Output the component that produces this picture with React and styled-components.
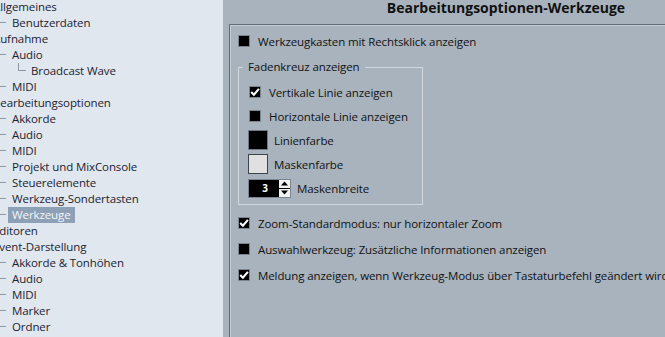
import React from "react";
import styled, { createGlobalStyle } from "styled-components";

const Global = createGlobalStyle`
  html, body { margin: 0; padding: 0; overflow: hidden; }
  body { font-family: "Open Sans", "Noto Sans", sans-serif; font-size: 11.5px; letter-spacing: -0.1px; }
`;

const Window = styled.div`
  display: flex;
  width: 665px;
  height: 337px;
  overflow: hidden;
  background: #a8b3be;
`;

const Sidebar = styled.div`
  flex: none;
  width: 223px;
  height: 100%;
  overflow: hidden;
  background: #e1e7ef;
`;

const Tree = styled.div`
  margin: -1px 0 0 -7px;
  display: flex;
  flex-direction: column;
`;

const Row = styled.div`
  display: flex;
  align-items: center;
  height: 16px;
  white-space: nowrap;
  color: #1b2331;
`;

const Indent = styled.span`
  flex: none;
  width: ${(p) => p.$w}px;
`;

const Branch = styled.span`
  flex: none;
  align-self: flex-start;
  width: ${(p) => p.$w}px;
  height: 8px;
  box-sizing: border-box;
  border-bottom: 1px solid #8e98a3;
  border-left: ${(p) => (p.$elbow ? "1px solid #8e98a3" : "none")};
  margin-right: ${(p) => p.$gap}px;
`;

const Label = styled.span`
  line-height: 16px;
  padding: 0 4px;
  margin-left: -4px;
  background: ${(p) => (p.$selected ? "#8da0b6" : "transparent")};
  color: ${(p) => (p.$selected ? "#f4f7fb" : "inherit")};
`;

const Main = styled.div`
  flex: none;
  width: 554px;
  padding-left: 6px;
  display: flex;
  flex-direction: column;
`;

const Header = styled.div`
  height: 24px;
  text-align: center;
  font-weight: 700;
  font-size: 14px;
  letter-spacing: 0;
  line-height: 16px;
  color: #111;
  white-space: nowrap;
`;

const Frame = styled.div`
  flex: 1;
  border-top: 1px solid #636d78;
  border-left: 1px solid #636d78;
  box-shadow: inset 1px 1px 0 #c3cbd3;
  padding: 3px 0 0 8px;
  display: flex;
  flex-direction: column;
  align-items: flex-start;
  color: #121212;
`;

const OptRow = styled.div`
  display: flex;
  align-items: center;
  height: ${(p) => p.$h || 26}px;
  gap: ${(p) => p.$gap || 8}px;
  white-space: nowrap;
`;

const Box = styled.span`
  flex: none;
  width: 12px;
  height: 12px;
  box-sizing: border-box;
  background: #000;
  border: 1px solid #7b8691;
  display: flex;
  align-items: center;
  justify-content: center;
`;

const Group = styled.fieldset`
  margin: 5px 0;
  width: 185px;
  box-sizing: border-box;
  border: 1px solid #d2d8de;
  padding: 5px 0 4px 10px;
  min-width: 0;
`;

const Legend = styled.legend`
  margin-left: -6px;
  padding: 0 5px;
  line-height: 16px;
  color: #121212;
`;

const Swatch = styled.span`
  flex: none;
  width: 20px;
  height: 20px;
  box-sizing: border-box;
  margin-left: -1px;
  background: ${(p) => p.$color};
  border: 1px solid ${(p) => p.$border};
`;

const Spin = styled.span`
  flex: none;
  display: flex;
  width: 43px;
  height: 19px;
  margin-left: -1px;
  box-sizing: border-box;
  border: 1px solid #7b8691;
  background: #000;
`;

const SpinField = styled.span`
  flex: 1;
  color: #fff;
  font-size: 10px;
  font-weight: 700;
  display: flex;
  align-items: center;
  justify-content: center;
  padding-left: 2px;
`;

const SpinButtons = styled.span`
  flex: none;
  width: 11px;
  display: flex;
  flex-direction: column;
  gap: 1px;
`;

const SpinBtn = styled.span`
  flex: 1;
  background: #f2f2f2;
  display: flex;
  align-items: center;
  justify-content: center;
`;

const Check = () => (
  <svg width="10" height="10" viewBox="0 0 10 10">
    <path d="M1.2 5 L3.9 7.8 L8.9 1.9" fill="none" stroke="#fff" strokeWidth="2.1" />
  </svg>
);

const CheckBox = ({ checked }) => <Box>{checked && <Check />}</Box>;

const tree = [
  ["Allgemeines", 0],
  ["Benutzerdaten", 1],
  ["Aufnahme", 0],
  ["Audio", 1],
  ["Broadcast Wave", 2],
  ["MIDI", 1],
  ["Bearbeitungsoptionen", 0],
  ["Akkorde", 1],
  ["Audio", 1],
  ["MIDI", 1],
  ["Projekt und MixConsole", 1],
  ["Steuerelemente", 1],
  ["Werkzeug-Sondertasten", 1],
  ["Werkzeuge", 1, true],
  ["Editoren", 0],
  ["Event-Darstellung", 0],
  ["Akkorde & Tonhöhen", 1],
  ["Audio", 1],
  ["MIDI", 1],
  ["Marker", 1],
  ["Ordner", 1],
];

const TreeRow = ({ text, level, selected }) => (
  <Row>
    {level === 1 && (
      <>
        <Indent $w={6} />
        <Branch $w={7} $gap={6} />
      </>
    )}
    {level === 2 && (
      <>
        <Indent $w={25} />
        <Branch $w={8} $gap={5} $elbow />
      </>
    )}
    <Label $selected={selected}>{text}</Label>
  </Row>
);

export default function App() {
  return (
    <>
      <Global />
      <Window>
        <Sidebar>
          <Tree>
            {tree.map(([t, l, s], i) => (
              <TreeRow key={i} text={t} level={l} selected={s} />
            ))}
          </Tree>
        </Sidebar>
        <Main>
          <Header>Bearbeitungsoptionen-Werkzeuge</Header>
          <Frame>
            <OptRow>
              <CheckBox />
              <span>Werkzeugkasten mit Rechtsklick anzeigen</span>
            </OptRow>
            <Group>
              <Legend>Fadenkreuz anzeigen</Legend>
              <OptRow $h={24}>
                <CheckBox checked />
                <span>Vertikale Linie anzeigen</span>
              </OptRow>
              <OptRow $h={24}>
                <CheckBox />
                <span>Horizontale Linie anzeigen</span>
              </OptRow>
              <OptRow $h={24} $gap={6}>
                <Swatch $color="#000" $border="#6f7a85" />
                <span>Linienfarbe</span>
              </OptRow>
              <OptRow $h={24} $gap={6}>
                <Swatch $color="#e0e0e0" $border="#3c434a" />
                <span>Maskenfarbe</span>
              </OptRow>
              <OptRow $h={24} $gap={6}>
                <Spin>
                  <SpinField>3</SpinField>
                  <SpinButtons>
                    <SpinBtn>
                      <svg width="7" height="5" viewBox="0 0 7 5">
                        <path d="M0 4.5 L3.5 0.5 L7 4.5 Z" fill="#000" />
                      </svg>
                    </SpinBtn>
                    <SpinBtn>
                      <svg width="7" height="5" viewBox="0 0 7 5">
                        <path d="M0 0.5 L3.5 4.5 L7 0.5 Z" fill="#000" />
                      </svg>
                    </SpinBtn>
                  </SpinButtons>
                </Spin>
                <span>Maskenbreite</span>
              </OptRow>
            </Group>
            <OptRow>
              <CheckBox checked />
              <span>Zoom-Standardmodus: nur horizontaler Zoom</span>
            </OptRow>
            <OptRow>
              <CheckBox />
              <span>Auswahlwerkzeug: Zusätzliche Informationen anzeigen</span>
            </OptRow>
            <OptRow>
              <CheckBox checked />
              <span>Meldung anzeigen, wenn Werkzeug-Modus über Tastaturbefehl geändert wird</span>
            </OptRow>
          </Frame>
        </Main>
      </Window>
    </>
  );
}
